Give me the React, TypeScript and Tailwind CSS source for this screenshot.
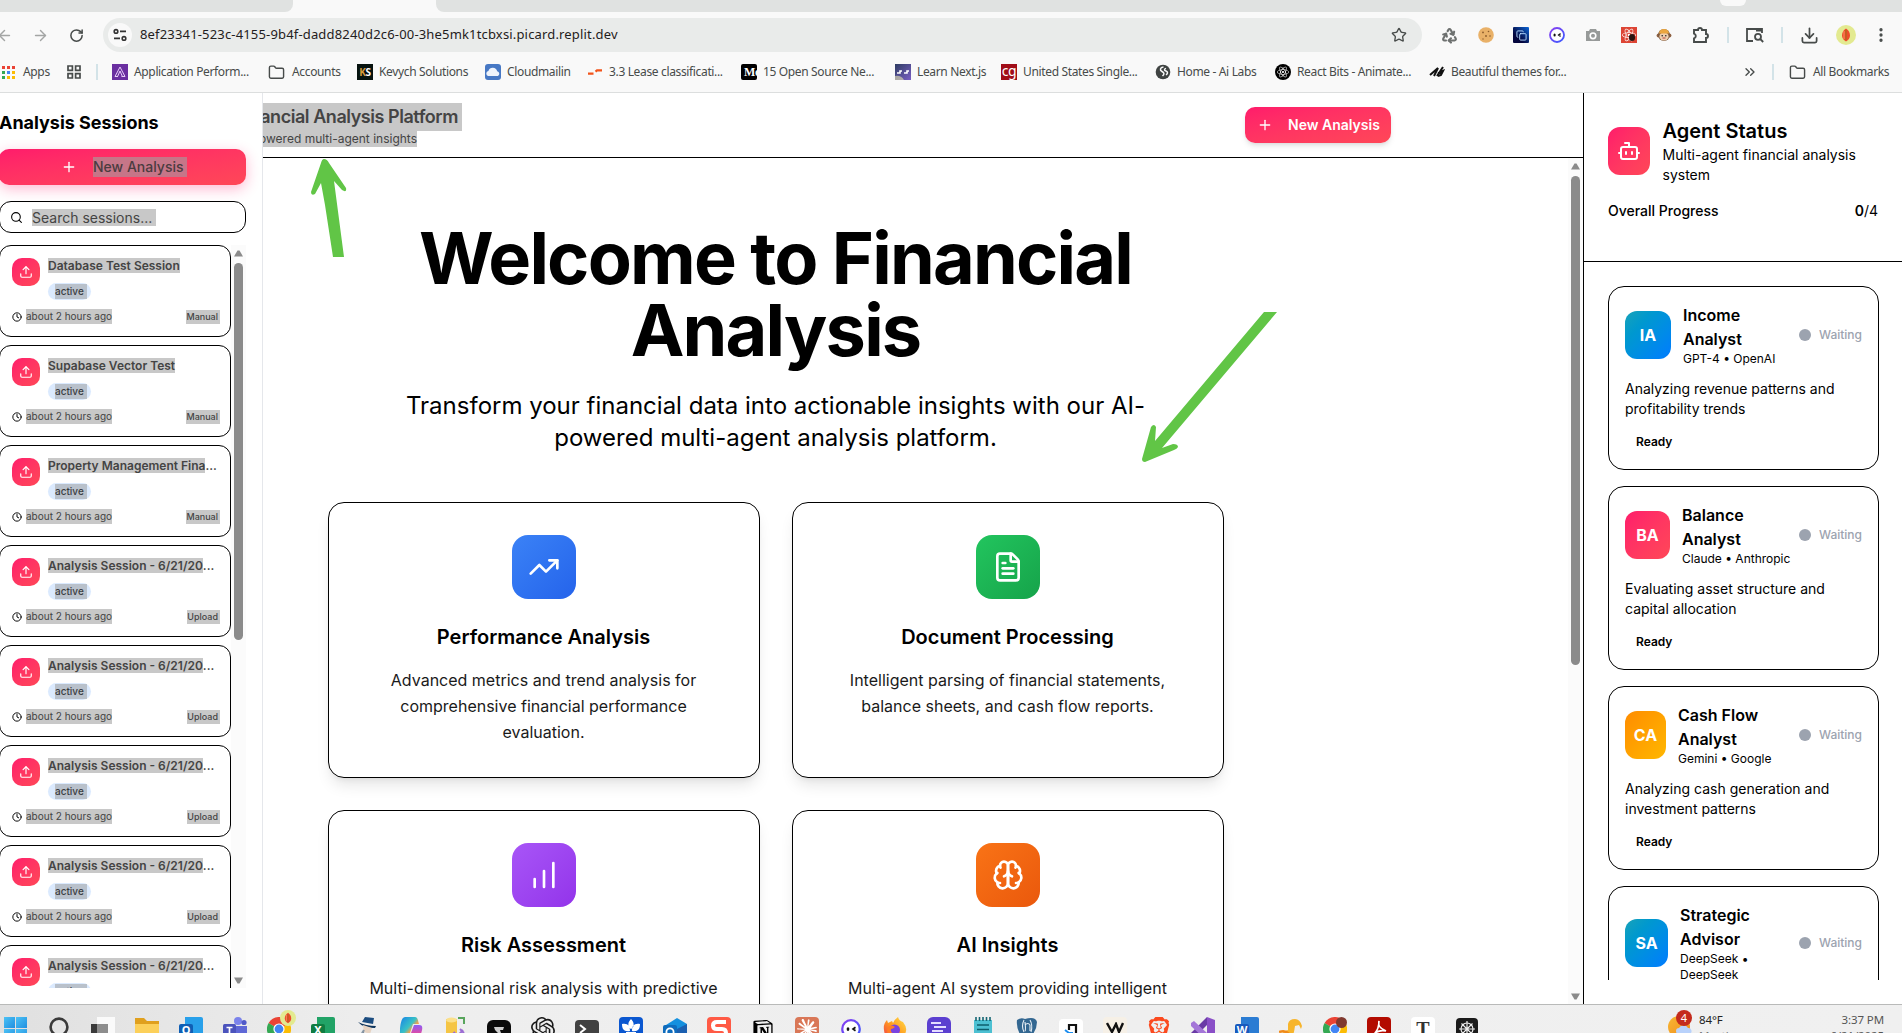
import React from "react";
import {
  ArrowLeft, ArrowRight, RotateCw, Star, Folder, Recycle, Download,
  EllipsisVertical, Plus, Search, Upload, Clock, Bot, TrendingUp, FileText,
  ChartNoAxesColumnIncreasing, ChevronsRight, Copy,
} from "lucide-react";
import { SiNotion, SiOpenai, SiClaude, SiBrave, SiReact } from "react-icons/si";

const PINK = "bg-linear-to-br from-[#ff1b6b] to-[#ff4757]";

/* ---------- browser chrome ---------- */

const Sep = ({ className = "" }: { className?: string }) => (
  <span className={`h-4 w-[2px] shrink-0 bg-[#d3e3e8] ${className}`} />
);

const Face = ({ size = 16 }: { size?: number }) => (
  <svg width={size} height={size} viewBox="0 0 16 16" className="shrink-0">
    <defs>
      <linearGradient id="faceRing" x1="0" y1="0" x2="1" y2="1">
        <stop offset="0" stopColor="#8a3ff0" />
        <stop offset="1" stopColor="#3b5bff" />
      </linearGradient>
    </defs>
    <circle cx="8" cy="8" r="7" fill="#fff" stroke="url(#faceRing)" strokeWidth="1.8" />
    <ellipse cx="5.6" cy="8" rx="1.100" ry="1.500" fill="#111" />
    <path d="M11.6 6.6 9.6 8l2 1.4" fill="none" stroke="#111" strokeWidth="1.3" />
  </svg>
);

const Avatar = ({ size = 20 }: { size?: number }) => (
  <svg width={size} height={size} viewBox="0 0 20 20" className="shrink-0">
    <circle cx="10" cy="10" r="10" fill="#e3ea90" />
    <path d="M10 3.500c3 2 4 4.500 4 7s-1.500 4.500-4 6c-2.500-1.500-4-3.500-4-6s1-5 4-7z" fill="#ee4a2b" />
    <path d="M10 5v10" stroke="#b9631f" strokeWidth="1.500" />
    <path d="M8 6v8" stroke="#ff8f62" strokeWidth="1" />
  </svg>
);

function Chrome() {
  return (
    <div className="h-[93px] shrink-0 border-b border-[#dcdede] bg-[#f9f9f9] font-['Noto_Sans','Open_Sans',sans-serif]">
      <div className="flex h-3 bg-[#f9f9f9]">
        <div className="w-[293px] rounded-br-lg bg-[#e0e2e1]" />
        <div className="w-[143px]" />
        <div className="flex flex-1 rounded-bl-lg bg-[#e0e2e1] pl-[1284px]">
          <div className="h-[6px] w-[26px] rounded-b-full bg-[#f9f9f9]" />
        </div>
      </div>
      <div className="flex h-[46px] items-center text-[#474b4a]">
        <ArrowLeft size={17} className="-ml-[4px] shrink-0 text-[#a3a5a4]" />
        <ArrowRight size={17} className="ml-[19px] shrink-0 text-[#a3a5a4]" />
        <RotateCw size={15} strokeWidth={2.4} className="ml-5 shrink-0" />
        <div className="ml-[19px] flex h-[34px] w-[1319px] items-center rounded-full bg-[#e9ebea] px-[5px]">
          <div className="flex size-6 items-center justify-center rounded-full bg-[#f9f9f9]">
            <svg width="14" height="14" viewBox="0 0 14 14" fill="none" stroke="#333" strokeWidth="1.6">
              <circle cx="3" cy="3.4" r="1.8" />
              <path d="M7 3.4h6M1 10.4h6" />
              <circle cx="11" cy="10.4" r="1.8" />
            </svg>
          </div>
          <span className="ml-2 whitespace-nowrap text-[13px] tracking-[0.165px] text-[#1f2020]">
            8ef23341-523c-4155-9b4f-dadd8240d2c6-00-3he5mk1tcbxsi.picard.replit.dev
          </span>
          <Star size={16} className="mr-[10px] ml-auto" />
        </div>
        <div className="ml-[19px] flex w-[268px] items-center justify-between">
          <Recycle size={17} strokeWidth={3} className="text-[#6e7170]" />
          <svg width="16" height="16" viewBox="0 0 16 16">
            <circle cx="8" cy="8" r="7.8" fill="#e9b168" />
            <g fill="#8a5a2b">
              <circle cx="5" cy="5.4" r=".9" /><circle cx="10.5" cy="4.5" r=".8" /><circle cx="8" cy="9" r=".9" />
              <circle cx="12" cy="9" r=".8" /><circle cx="5" cy="12" r=".7" />
            </g>
          </svg>
          <span className="flex size-4 items-center justify-center rounded-[1px] bg-linear-to-bl from-[#0a66d8] to-[#04063d] to-70%">
            <Copy size={11} className="-scale-x-100 -scale-y-100 rotate-180 text-[#b8dcff]" />
          </span>
          <Face />
          <svg width="16" height="16" viewBox="0 0 16 16">
            <path d="M1 4h3l1-2h6l1 2h3v10H1z" fill="#979a99" />
            <circle cx="8" cy="8.8" r="2.8" fill="none" stroke="#fff" strokeWidth="1.6" />
          </svg>
          <span className="relative flex size-4 items-center justify-center bg-[#dd4535]">
            <SiReact size={14} className="text-white" />
            <i className="absolute right-[2px] bottom-[2px] h-[7px] w-[6px] rounded-full bg-[#2b1512]" />
          </span>
          <svg width="16" height="16" viewBox="0 0 16 16">
            <circle cx="2.6" cy="8.6" r="2" fill="#8f6244" /><circle cx="13.4" cy="8.6" r="2" fill="#8f6244" />
            <circle cx="8" cy="8" r="6" fill="#7d5a3f" /><ellipse cx="8" cy="9.4" rx="4.6" ry="4" fill="#f0cfae" />
            <path d="M3 6.4a5 4.4 0 0 1 10 0z" fill="#eba63f" />
            <circle cx="6.2" cy="8.8" r=".8" fill="#222" /><circle cx="9.8" cy="8.8" r=".8" fill="#222" />
            <path d="M6.5 11h3" stroke="#a33" strokeWidth=".9" />
          </svg>
          <svg width="17" height="18" viewBox="0 0 17 18" fill="none" stroke="#474b4a" strokeWidth="1.9">
            <path d="M2 4h4a2 2 0 0 1 4 0h4v4a2 2 0 0 1 0 4v4H2v-3.600a2.500 2.500 0 0 0 0-4.800z" />
          </svg>
        </div>
        <Sep className="ml-[18px]" />
        <svg width="18" height="16" viewBox="0 0 18 16" fill="none" stroke="#474b4a" strokeWidth="1.8" className="ml-[17px] shrink-0">
          <path d="M7 14H1V2h15v4" /><path d="M10 3h6" strokeWidth="3" />
          <circle cx="12" cy="9.8" r="3" /><path d="m14.2 12 3 3" />
        </svg>
        <Sep className="ml-[17px]" />
        <Download size={19} strokeWidth={2.2} className="ml-[17px] shrink-0" />
        <span className="ml-[17px] flex shrink-0"><Avatar /></span>
        <EllipsisVertical size={18} strokeWidth={2.4} className="ml-[16px] shrink-0" />
      </div>
      <Bookmarks />
    </div>
  );
}

const Bm = ({ icon, label, w, gap = "gap-[6px]" }: { icon: React.ReactNode; label: string; w: string; gap?: string }) => (
  <div className={`flex shrink-0 items-center ${gap} ${w}`}>
    <span className="flex w-4 shrink-0 justify-center">{icon}</span>
    <span className="whitespace-nowrap">{label}</span>
  </div>
);

function Bookmarks() {
  const dots = ["#ea4335", "#ea4335", "#ea4335", "#34a853", "#4285f4", "#fbbc04", "#34a853", "#fbbc04", "#fbbc04"];
  return (
    <div className="flex h-[28px] items-center text-[12px] tracking-[-0.35px] text-[#474b4a]">
      <div className="ml-[2px] grid shrink-0 grid-cols-3 gap-[2px]">
        {dots.map((c, i) => <span key={i} className="size-[3px]" style={{ background: c }} />)}
      </div>
      <span className="ml-2 w-[43px] shrink-0">Apps</span>
      <svg width="16" height="16" viewBox="0 0 16 16" fill="none" stroke="#474b4a" strokeWidth="1.7" className="shrink-0">
        <path d="M2 2h4.400v4.400H2zM9.600 2H14v4.400H9.600zM2 9.600h4.400V14H2zM9.600 9.600H14V14H9.600z" />
      </svg>
      <Sep className="mx-[14px]" />
      <Bm w="w-[156px]" label="Application Perform..." icon={
        <span className="flex size-4 items-center justify-center bg-[#6a2fa0]">
          <svg width="12" height="12" viewBox="0 0 12 12" fill="none" stroke="#e7cdf7"><path d="M6 1 1 10.5h3M6 1l5 9.5H7.5M6 5l-2.4 5.5M6 5l2.4 5.5" /></svg>
        </span>} />
      <Bm w="w-[89px]" gap="gap-2" label="Accounts" icon={<Folder size={17} className="shrink-0" />} />
      <Bm w="w-[128px]" label="Kevych Solutions" icon={
        <span className="flex size-4 items-center justify-center bg-[#07130f] font-['Open_Sans',sans-serif] text-[10px] font-bold text-white"><i className="not-italic text-[#d59a3a]">K</i>S</span>} />
      <Bm w="w-[102px]" label="Cloudmailin" icon={
        <svg width="16" height="16" viewBox="0 0 16 16"><rect width="16" height="16" rx="3" fill="#4778c4" /><path d="M3 12a2.6 2.6 0 0 1 .4-5 4.6 4.6 0 0 1 8.8.2A2.6 2.6 0 0 1 13 12z" fill="#eef3fb" /></svg>} />
      <Bm w="w-[154px]" label="3.3 Lease classificati..." icon={
        <svg width="14" height="6" viewBox="0 0 14 6" fill="none" stroke="#f2541b" strokeWidth="2.2"><path d="M0 4.6h5.5M7.5 2.6 9 1.4h5" /></svg>} />
      <Bm w="w-[154px]" label="15 Open Source Ne..." icon={
        <span className="flex size-4 items-center overflow-hidden rounded-[2px] bg-black pl-[3px] font-['Liberation_Serif',serif] text-[12px] font-bold text-white">Mo</span>} />
      <Bm w="w-[106px]" label="Learn Next.js" icon={
        <svg width="16" height="16" viewBox="0 0 16 16"><defs><linearGradient id="lnj" x1="0" y1="0" x2="1" y2="1"><stop offset="0" stopColor="#2e3d63" /><stop offset="1" stopColor="#7a5fc4" /></linearGradient></defs><path fill="url(#lnj)" d="M0 0h16v16H0z" /><path d="M0 16V12q6-1 9 4z" fill="#e8e6b0" opacity=".6" /><path d="M2 9h3V7h2M9 9h3V7h2" stroke="#fff" strokeWidth="1.6" fill="none" /></svg>} />
      <Bm w="w-[154px]" label="United States Single..." icon={
        <span className="flex size-4 items-center justify-center overflow-hidden bg-[#a10d18] pb-[3px] text-[14px] leading-4 text-white">cg</span>} />
      <Bm w="w-[120px]" label="Home - Ai Labs" icon={
        <svg width="16" height="16" viewBox="0 0 16 16"><circle cx="8" cy="8" r="7.300" fill="#3f4342" /><path d="M8.500 3C5 3.500 4.500 6 7 7.500S9.500 10 7.500 12M11 4.400c-2 .6-2 2 0 2.600s2 2.600 0 4" fill="none" stroke="#f9f9f9" strokeWidth="1.5" /></svg>} />
      <Bm w="w-[154px]" label="React Bits - Animate..." icon={
        <span className="flex size-4 items-center justify-center rounded-full bg-black"><SiReact size={12} className="text-white" /></span>} />
      <Bm w="w-[140px]" label="Beautiful themes for..." icon={
        <svg width="16" height="16" viewBox="0 0 16 16" fill="none" stroke="#111" strokeWidth="2"><path d="M1 11 9 4 5 12M8 12l6-9M9 9l5-2-2 4-3 1" /></svg>} />
      <ChevronsRight size={16} className="mr-[14px] ml-auto shrink-0" />
      <Sep />
      <span className="w-[15px] shrink-0" />
      <Bm w="w-[113px]" gap="gap-2" label="All Bookmarks" icon={<Folder size={17} className="shrink-0" />} />
    </div>
  );
}

/* ---------- shared ---------- */

const Sel = ({ children, className = "" }: { children: React.ReactNode; className?: string }) => (
  <span className={`bg-[#c8c8c8] text-[#444] ${className}`}>{children}</span>
);

const Tri = ({ down = false }: { down?: boolean }) => (
  <svg width="9" height="7" viewBox="0 0 9 7" className="shrink-0">
    <path d={down ? "M0 .5h9L5.5 6.5h-2z" : "M0 6.5h9L5.5.5h-2z"} fill="#8b8b8b" />
  </svg>
);

/* ---------- sidebar ---------- */

const sessions = [
  ["Database Test Session", "Manual"],
  ["Supabase Vector Test", "Manual"],
  ["Property Management Fina", "Manual", "..."],
  ["Analysis Session - 6/21/20", "Upload", "..."],
  ["Analysis Session - 6/21/20", "Upload", "..."],
  ["Analysis Session - 6/21/20", "Upload", "..."],
  ["Analysis Session - 6/21/20", "Upload", "..."],
  ["Analysis Session - 6/21/20", "Upload", "..."],
];

function SessionCard({ s }: { s: string[] }) {
  return (
    <div className="h-[92px] shrink-0 rounded-xl border border-black bg-white px-3 pt-3">
      <div className="flex gap-2">
        <div className={`flex size-7 shrink-0 items-center justify-center rounded-[10px] ${PINK}`}>
          <Upload size={14} className="text-white" />
        </div>
        <div className="min-w-0">
          <div className="flex h-[15px] whitespace-nowrap text-[12px] leading-[15px] font-semibold text-[#333]">
            <Sel>{s[0]}</Sel>{s[2]}
          </div>
          <div className="mt-[10px] flex h-[17px] w-[43px] items-center rounded-full bg-[#dbeafe] pl-[7px]">
            <span className="h-[15px] w-8 bg-[#b9c1cb] text-[10px] leading-[15px] font-medium text-[#3a3d42]">active</span>
          </div>
        </div>
      </div>
      <div className="mt-[9px] flex h-[15px] items-center">
        <Clock size={10} strokeWidth={2.300} className="text-black" />
        <Sel className="ml-1 text-[10px] leading-[15px] whitespace-nowrap">about 2 hours ago</Sel>
        <Sel className="ml-auto -mr-[2px] pr-[2px] text-[9px] leading-[14px] font-medium">{s[1]}</Sel>
      </div>
    </div>
  );
}

function Sidebar() {
  return (
    <aside className="flex w-[263px] shrink-0 flex-col overflow-hidden border-r border-[#e5e7eb] bg-white">
      <h2 className="mt-4 -ml-px text-[18px] leading-7 font-bold tracking-[-0.03px] whitespace-nowrap">Analysis Sessions</h2>
      <button className={`mt-3 -ml-px flex h-9 w-[247px] shrink-0 items-center rounded-[10px] pl-[62px] text-sm shadow-[0_4px_14px_rgba(255,27,107,0.3)] ${PINK}`}>
        <Plus size={16} className="text-white" />
        <span className="ml-4 h-5 w-[94px] bg-[#c67688] text-left leading-5 font-medium whitespace-nowrap text-[#4a3c40]">New Analysis</span>
      </button>
      <div className="mt-4 -ml-px flex h-8 w-[247px] shrink-0 items-center rounded-xl border border-black pl-[10px]">
        <Search size={13} />
        <Sel className="ml-[9px] w-[124px] text-sm leading-[17px]">Search sessions...</Sel>
      </div>
      <div className="mt-3 -ml-px flex h-[743px] w-[247px] overflow-hidden">
        <div className="flex w-[232px] flex-col gap-2">
          {sessions.map((s, i) => <SessionCard key={i} s={s} />)}
        </div>
        <div className="flex w-[15px] flex-col items-center bg-[#fbfbfb] pt-[5px] pb-1">
          <Tri />
          <div className="mt-[6px] h-[377px] w-[9px] rounded-full bg-[#8b8b8b]" />
          <span className="flex-1" />
          <Tri down />
        </div>
      </div>
    </aside>
  );
}

/* ---------- main ---------- */

const BrainIcon = ({ size = 32, className = "" }: { size?: number; className?: string }) => (
  <svg width={size} height={size} viewBox="0 0 24 24" fill="none" stroke="currentColor" strokeWidth="2" strokeLinecap="round" strokeLinejoin="round" className={className}>
    <path d="M12 5a3 3 0 1 0-5.997.125 4 4 0 0 0-2.526 5.770 4 4 0 0 0 .556 6.588A4 4 0 1 0 12 18Z" />
    <path d="M12 5a3 3 0 1 1 5.997.125 4 4 0 0 1 2.526 5.770 4 4 0 0 1-.556 6.588A4 4 0 1 1 12 18Z" />
    <path d="M15 13a4.500 4.500 0 0 1-3-4 4.500 4.500 0 0 1-3 4" />
    <path d="M17.599 6.500a3 3 0 0 0 .399-1.375" />
    <path d="M6.003 5.125A3 3 0 0 0 6.401 6.500" />
    <path d="M3.477 10.896a4 4 0 0 1 .585-.396" />
    <path d="M19.938 10.500a4 4 0 0 1 .585.396" />
    <path d="M6 18a4 4 0 0 1-1.967-.516" />
    <path d="M19.967 17.484A4 4 0 0 1 18 18" />
  </svg>
);

const features = [
  { t: "Performance Analysis", d: "Advanced metrics and trend analysis for comprehensive financial performance evaluation.", I: TrendingUp, c: "from-[#3b82f6] to-[#2563eb]" },
  { t: "Document Processing", d: "Intelligent parsing of financial statements, balance sheets, and cash flow reports.", I: FileText, c: "from-[#22c55e] to-[#16a34a]" },
  { t: "Risk Assessment", d: "Multi-dimensional risk analysis with predictive modeling and scenario planning.", I: ChartNoAxesColumnIncreasing, c: "from-[#a855f7] to-[#9333ea]" },
  { t: "AI Insights", d: "Multi-agent AI system providing intelligent recommendations and insights.", I: BrainIcon, c: "from-[#f97316] to-[#ea580c]" },
];

function Main() {
  return (
    <main className="relative flex min-w-0 flex-1 flex-col overflow-hidden bg-white">
      <header className="flex h-[65px] shrink-0 items-center border-b border-black">
        <div className="flex w-[199px] flex-col items-end overflow-hidden whitespace-nowrap">
          <Sel className="h-7 pr-1 text-[18px] leading-7 font-semibold tracking-tight">Financial Analysis Platform</Sel>
          <Sel className="mr-[45px] h-4 text-xs leading-4">AI-powered multi-agent insights</Sel>
        </div>
        <button className={`ml-[783px] flex h-9 w-[146px] items-center rounded-[10px] pl-3 text-sm font-semibold whitespace-nowrap text-white shadow-md ${PINK}`}>
          <Plus size={16} />
          <span className="ml-[15px]">New Analysis</span>
        </button>
      </header>
      <div className="flex min-h-0 flex-1">
        <div className="w-[1305px] overflow-hidden pt-16">
          <div className="ml-[64.5px] w-[896px] text-center">
            <h1 className="text-[72px] leading-[72px] font-bold tracking-tight">Welcome to Financial Analysis</h1>
            <p className="mx-auto mt-6 w-[768px] text-2xl leading-8">
              Transform your financial data into actionable insights with our AI-powered multi-agent analysis platform.
            </p>
            <div className="mt-12 grid grid-cols-2 gap-8">
              {features.map(({ t, d, I, c }) => (
                <div key={t} className="flex h-[276px] flex-col items-center rounded-2xl border border-black bg-white p-8 shadow-lg">
                  <div className={`flex size-16 shrink-0 items-center justify-center rounded-2xl bg-linear-to-br ${c}`}>
                    <I size={32} className="text-white" />
                  </div>
                  <h3 className="mt-6 text-xl leading-7 font-semibold">{t}</h3>
                  <p className="mt-4 text-base leading-[26px] text-[#1a1a1a]">{d}</p>
                </div>
              ))}
            </div>
          </div>
        </div>
        <div className="flex w-[15px] flex-col items-center bg-[#fbfbfb] pt-[5px] pb-1">
          <Tri />
          <div className="mt-[6px] h-[489px] w-[9px] rounded-full bg-[#8b8b8b]" />
          <span className="flex-1" />
          <Tri down />
        </div>
      </div>
      {/* hand-drawn annotation arrows over the page */}
      <svg width="1320" height="911" viewBox="263 93 1320 911" className="pointer-events-none absolute top-0 left-0" fill="#61c546">
        <path d="M324 159q-2 0-3 4l-10 29q0 4 4 2l6-11 4 22 8 52h11l-10-76 8 9q5 3 4-2l-17-25q-2-4-5-4z" />
        <path d="M1264 312h13L1162 448l11-4q5 0 5 3-1 2-4 3l-29 12q-3 0-3-3l9-32q3-4 5 0l-1 14z" />
      </svg>
    </main>
  );
}

/* ---------- agent panel ---------- */

const agents = [
  { a: "IA", n: ["Income", "Analyst"], m: ["GPT-4 • OpenAI"], d: "Analyzing revenue patterns and profitability trends", c: "from-[#17a2b8] to-[#007bff]", w: "w-[46px]" },
  { a: "BA", n: ["Balance", "Analyst"], m: ["Claude • Anthropic"], d: "Evaluating asset structure and capital allocation", c: "from-[#ff1b6b] to-[#ff4757]", w: "w-[45px]" },
  { a: "CA", n: ["Cash Flow", "Analyst"], m: ["Gemini • Google"], d: "Analyzing cash generation and investment patterns", c: "from-[#ff8c00] to-[#ffb700]", w: "w-[41px]" },
  { a: "SA", n: ["Strategic", "Advisor"], m: ["DeepSeek •", "DeepSeek"], d: "Synthesizing strategic recommendations", c: "from-[#17a2b8] to-[#007bff]", w: "w-[43px]" },
];

function AgentPanel() {
  return (
    <aside className="flex w-[319px] shrink-0 flex-col border-l border-black bg-white">
      <div className="h-[169px] shrink-0 border-b border-black p-6">
        <div className="flex items-center gap-[12.500px]">
          <div className={`flex h-12 w-[42px] shrink-0 items-center justify-center rounded-xl ${PINK}`}>
            <Bot size={24} className="text-white" />
          </div>
          <div>
            <h2 className="text-xl leading-7 font-semibold">Agent Status</h2>
            <p className="text-sm leading-5">Multi-agent financial analysis system</p>
          </div>
        </div>
        <div className="mt-4 flex justify-between text-sm leading-5">
          <span className="font-medium">Overall Progress</span>
          <span><b className="font-semibold">0</b>/4</span>
        </div>
      </div>
      <div className="flex h-[718px] flex-col gap-4 overflow-hidden px-6 pt-6">
        {agents.map((g) => (
          <div key={g.a} className="w-[271px] shrink-0 rounded-2xl border border-black p-4">
            <div className="flex items-center">
              <div className={`flex h-12 shrink-0 items-center justify-center rounded-xl bg-linear-to-br text-base font-bold text-white ${g.c} ${g.w}`}>{g.a}</div>
              <div className="ml-3 whitespace-nowrap">
                {g.n.map((l) => <div key={l} className="text-base leading-6 font-semibold">{l}</div>)}
                {g.m.map((l) => <div key={l} className="text-xs leading-4">{l}</div>)}
              </div>
              <span className="ml-auto size-3 rounded-full bg-[#9ca3af]" />
              <span className="ml-2 text-xs font-medium text-[#9ca3af]">Waiting</span>
            </div>
            <p className="mt-3 text-sm leading-5">{g.d}</p>
            <div className="mt-3 flex h-[22px] items-center pl-[11px] text-xs font-semibold">Ready</div>
          </div>
        ))}
      </div>
    </aside>
  );
}

/* ---------- taskbar ---------- */

const Tile = ({ bg, children, className = "" }: { bg: string; children?: React.ReactNode; className?: string }) => (
  <span className={`flex size-6 shrink-0 items-center justify-center overflow-hidden rounded-[4px] ${className}`} style={{ background: bg }}>{children}</span>
);

const ChromeLogo = () => (
  <svg width="24" height="24" viewBox="0 0 24 24">
    <path d="M12 12 1.6 6A12 12 0 0 1 22.4 6z" fill="#ea4335" /><path d="M12 12V24A12 12 0 0 0 22.4 6z" fill="#fbbc04" />
    <path d="M12 12 1.6 6A12 12 0 0 0 12 24z" fill="#34a853" /><path d="M2 6h20.4L12 12z" fill="#ea4335" />
    <circle cx="12" cy="12" r="5.6" fill="#fff" /><circle cx="12" cy="12" r="4.4" fill="#4285f4" />
  </svg>
);

const Office = ({ letter, back, front }: { letter: string; back: string; front: string }) => (
  <span className="flex h-6 w-6 items-center rounded-[2px]" style={{ background: `linear-gradient(90deg, transparent 25%, ${back} 25%)` }}>
    <span className="mt-[3px] flex size-[14px] items-center justify-center rounded-[2px] text-[11px] font-bold text-white" style={{ background: front }}>{letter}</span>
  </span>
);

const taskIcons: React.ReactNode[] = [
  <span className="grid grid-cols-2 gap-px">{[0, 1, 2, 3].map((i) => <i key={i} className="size-[11px] bg-linear-to-br from-[#4cc2f5] to-[#1f8fe0]" />)}</span>,
  <svg width="24" height="24" viewBox="0 0 24 24" fill="none" stroke="#3a3a3a" strokeWidth="2.6"><circle cx="12" cy="10" r="8.4" fill="#e4e4e4" /><path d="m17 17 5 6" /></svg>,
  <svg width="24" height="24" viewBox="0 0 24 24"><path d="M6 0h18v18H6z" fill="#fafafa" /><path d="M0 7h17v17H0z" fill="#3a3a3a" /><path d="M6 7h11v11H6z" fill="#8d8d8d" /></svg>,
  <svg width="24" height="24" viewBox="0 0 24 24"><path d="M0 1h9l3 3h12v8H0z" fill="#e0a01e" /><path d="M0 7h24v16H0z" fill="#fcd05a" /><path d="M5 18h14v6H5z" fill="#1f86d6" /></svg>,
  <Office letter="O" back="#28a0ea" front="#0f5fb5" />,
  <svg width="24" height="24" viewBox="0 0 24 24"><circle cx="15" cy="4" r="4" fill="#7b83eb" /><circle cx="21" cy="5.500" r="2.600" fill="#5059c9" /><path d="M8 9h16v15H8z" fill="#5f68d6" /><rect y="7" width="13" height="13" rx="1.500" fill="#4b53bc" /><path d="M3.500 10.500h6M6.500 10.500v7" stroke="#fff" strokeWidth="1.700" /></svg>,
  <span className="relative"><ChromeLogo /><span className="absolute -top-[7px] left-[13px]"><Avatar size={16} /></span></span>,
  <Office letter="X" back="#21a366" front="#107c41" />,
  <svg width="24" height="24" viewBox="0 0 24 24"><path d="M7 5 10 0l9 1-1 6z" fill="#1c4d80" /><path d="M3 5q8 4 18 4l-1 2Q8 11 3 5z" fill="#0f355c" /><path d="m8 8 9 3-2 6-6-2z" fill="#e6d3c2" /><path d="m6 24 2-9 6 4 6-3 1 8z" fill="#3c4a57" /><path d="m3 23 6-10" stroke="#8796a5" strokeWidth="2" /></svg>,
  <svg width="24" height="24" viewBox="0 0 24 24"><defs><linearGradient id="cop" x1="0" y1="0" x2="1" y2="1"><stop offset="0" stopColor="#1782e8" /><stop offset=".45" stopColor="#39c2c6" /><stop offset=".6" stopColor="#f5a04a" /><stop offset="1" stopColor="#d946ef" /></linearGradient><linearGradient id="cop2" x1="0" y1="0" x2="0" y2="1"><stop offset="0" stopColor="#8b5cf6" /><stop offset=".6" stopColor="#ec4899" /><stop offset="1" stopColor="#fb923c" /></linearGradient></defs><path d="M6 0h10c3 0 3 4 4 7h-6L9 22H4c-4 0-3-6-3-9S2 0 6 0z" fill="url(#cop)" /><path d="M15 8h5c5 0 3 5 2 9s-3 7-7 7H9z" fill="url(#cop2)" /></svg>,
  <svg width="24" height="24" viewBox="0 0 24 24"><path d="M3 2h11v20H3z" fill="#f5c544" /><ellipse cx="8.500" cy="3" rx="5.500" ry="2.500" fill="#fbe08a" /><path d="M15 1h6v6" fill="none" stroke="#58a55c" strokeWidth="2" /><path d="m12 22 8-9M17 12l4 4M12 15l-3 3 3 3" stroke="#9b6bd3" strokeWidth="2" fill="none" /></svg>,
  <Tile bg="#0b0b0b" className="mt-[3px] size-5 rounded-md"><svg width="14" height="16" viewBox="0 0 14 16"><path d="M2 3h10l-1 3H8l3 9H4l3-5-4-4z" fill="#cfcfcf" /></svg></Tile>,
  <SiOpenai size={24} className="text-[#1a1a1a]" />,
  <Tile bg="#414141" className="mt-[3px] rounded-[2px]"><svg width="18" height="16" viewBox="0 0 18 16" fill="none" stroke="#fff" strokeWidth="2"><path d="m2 1 5 4-5 4M9 11h7" /></svg></Tile>,
  <Tile bg="#0b57d0"><svg width="20" height="20" viewBox="0 0 20 20" fill="#fff"><path d="M10 0c4 4 3 8 0 10C7 8 6 4 10 0zM1 5c6-1 8 2 8 7-6 1-8-2-8-7zM19 5c-6-1-8 2-8 7 6 1 8-2 8-7zM5 13h10v3H5z" /></svg></Tile>,
  <svg width="24" height="24" viewBox="0 0 24 24"><path d="m3 8 11-7 10 6v17H3z" fill="#1490df" /><path d="m12 13 12-6v17H8z" fill="#1b5fb0" /><rect y="8" width="14" height="14" rx="2" fill="#0f6cbd" /><circle cx="7" cy="15" r="3.600" fill="none" stroke="#fff" strokeWidth="1.800" /></svg>,
  <Tile bg="#ff5a45"><svg width="18" height="20" viewBox="0 0 18 20" fill="none" stroke="#fff" strokeWidth="4"><path d="M16 3H7Q3 3 3 6.500T7 10h5q4 0 4 4t-4 4H2" /></svg></Tile>,
  <SiNotion size={20} className="mt-[3px] text-black" />,
  <Tile bg="#d97757"><SiClaude size={20} className="text-white" /></Tile>,
  <span className="mt-[2px]"><Face size={20} /></span>,
  <svg width="24" height="24" viewBox="0 0 24 24"><defs><linearGradient id="ffx" x1="1" y1="0" x2="0" y2="1"><stop offset="0" stopColor="#ffe14a" /><stop offset=".5" stopColor="#ff9a1f" /><stop offset="1" stopColor="#f0304f" /></linearGradient></defs><path d="M1 13Q0 7 4 3l1 3 4-2 1 2Q12 2 15 0q1 4 5 5 4 5 3 9-2 10-12 10Q2 23 1 13z" fill="url(#ffx)" /><circle cx="11.500" cy="13" r="5.500" fill="#7a43e0" /><path d="M5 10q4-3 7 0-2 2-4 2-1 5 6 5-8 4-10-3z" fill="#ff7d26" /></svg>,
  <Tile bg="#5b3fd0" className="rounded-md"><svg width="18" height="18" viewBox="0 0 18 18" stroke="#e4dcff" strokeWidth="2"><path d="M1 3h10M4 7h12M2 11h11M6 15h9" /></svg></Tile>,
  <svg width="20" height="24" viewBox="0 0 20 24"><path d="M1 3h18v21H1z" fill="#4cc0d2" /><path d="M3 0v4M6.500 0v4M10 0v4M13.500 0v4M17 0v4" stroke="#146674" strokeWidth="1.600" /><path d="M4 8h12M4 12.500h12M4 17h12" stroke="#0d5e6c" strokeWidth="1.500" /></svg>,
  <svg width="24" height="24" viewBox="0 0 24 24"><path d="M2 3q4-3 8-1 3-1 6-1 5 0 6 4 0 6-4 12l-2 7h-6l-1-7-3 2Q1 11 2 3z" fill="#336791" /><path d="M9 3Q6 9 9 15M10 14q1-1 0-9M15 3q3 5 1 12M10 8q3-3 5 0v6" fill="none" stroke="#e6eef5" strokeWidth="1.100" /></svg>,
  <Tile bg="#fff" className="mt-[2px] size-5"><svg width="16" height="18" viewBox="0 0 16 18" fill="none"><path d="M6 8V3h7v10" stroke="#111" strokeWidth="2.200" /><path d="m2 8 4 3-3 3M6 11h4" stroke="#1c8ef0" strokeWidth="2" /></svg></Tile>,
  <Tile bg="#f6f0e6"><svg width="18" height="14" viewBox="0 0 18 14" fill="none" stroke="#111" strokeWidth="2.400"><path d="M1 1l5 9 4-8 3 8 4-9" /></svg></Tile>,
  <SiBrave size={24} className="text-[#fb4a1f]" />,
  <svg width="24" height="24" viewBox="0 0 24 24"><path d="m16 0 8 3v18l-8 3z" fill="#8a4fc7" /><path d="M16 0 0 16v3l3 2L16 8z" fill="#6a3aa6" /><path d="M0 6 3 4l13 12v8L0 9z" fill="#a476d8" /></svg>,
  <Office letter="W" back="#2b7cd3" front="#185abd" />,
  <svg width="24" height="24" viewBox="0 0 24 24"><path d="M9 7q1-5 7-5 5 0 7 7l-1 3-2-4-4 1q-1 8-4 15H2q-3-8 7-11z" fill="#f7b52c" /><path d="M0 15q8-3 12 5" stroke="#f08a1a" strokeWidth="2.500" fill="none" /></svg>,
  <span className="relative"><ChromeLogo /><i className="absolute top-0 left-[13px] size-[11px] rounded-full bg-[#80392f]" /></span>,
  <Tile bg="#b30b00"><svg width="18" height="18" viewBox="0 0 18 18" fill="none" stroke="#fff" strokeWidth="1.600"><path d="M9 1c-1 4 0 7 7 10-5-1-10 0-14 5C6 13 9 8 9 1z" /></svg></Tile>,
  <Tile bg="#fff"><span className="font-['Liberation_Serif',serif] text-[20px] leading-6 font-bold text-[#333]">T</span></Tile>,
  <Tile bg="#1b1b1b" className="mt-px size-[22px]"><svg width="18" height="18" viewBox="0 0 18 18" fill="none" stroke="#eee" strokeWidth="1.200"><path d="M9 1v16M1 9h16M3.500 3.500l11 11M14.500 3.500l-11 11" /><circle cx="9" cy="9" r="6" /></svg></Tile>,
];

function Taskbar() {
  return (
    <div className="flex h-[29px] shrink-0 overflow-hidden border-t border-[#b9bab9] bg-linear-to-r from-[#e0e0e0] via-[#eeeeee] via-20% to-[#f0f0f0] font-['Noto_Sans',sans-serif]">
      <div className="flex h-[48px] w-[1496px] shrink-0 pt-[12px]">
        {taskIcons.map((ic, i) => (
          <div key={i} className="flex h-6 w-11 shrink-0 items-start justify-center first:-ml-[7px]">{ic}</div>
        ))}
      </div>
      <div className="ml-[172px] flex w-[28px] shrink-0 pt-[7px]">
        <span className="relative mt-1 h-6 w-6">
          <i className="block size-[22px] rounded-full bg-linear-to-br from-[#f7b733] to-[#f08a1a]" />
          <svg width="16" height="10" viewBox="0 0 16 10" className="absolute top-[8px] left-[8px]"><path d="M3 10a3 3 0 0 1 0-6 5 5 0 0 1 9 0 3 3 0 0 1 1 6z" fill="#b9d2fb" /></svg>
          <i className="absolute -top-[6px] left-[8px] flex size-4 items-center justify-center rounded-full bg-[#c42b1c] text-[11px] leading-4 text-white not-italic">4</i>
        </span>
      </div>
      <div className="ml-[3px] h-12 pt-[7px] text-[11.500px] leading-4 tracking-[-0.1px] whitespace-nowrap text-[#222]">84°F<br /><span className="text-[#777]">Mostly sunny</span></div>
      <div className="mr-[18px] ml-auto h-12 pt-[7px] text-right text-[11.500px] leading-4 tracking-[-0.1px] whitespace-nowrap text-[#555]">3:37 PM<br />6/21/2025</div>
    </div>
  );
}

export default function App() {
  return (
    <div className="flex h-[1033px] w-[1902px] flex-col overflow-hidden bg-white font-['Inter',sans-serif] text-black">
      <Chrome />
      <div className="flex h-[911px] shrink-0">
        <Sidebar />
        <Main />
        <AgentPanel />
      </div>
      <Taskbar />
    </div>
  );
}
